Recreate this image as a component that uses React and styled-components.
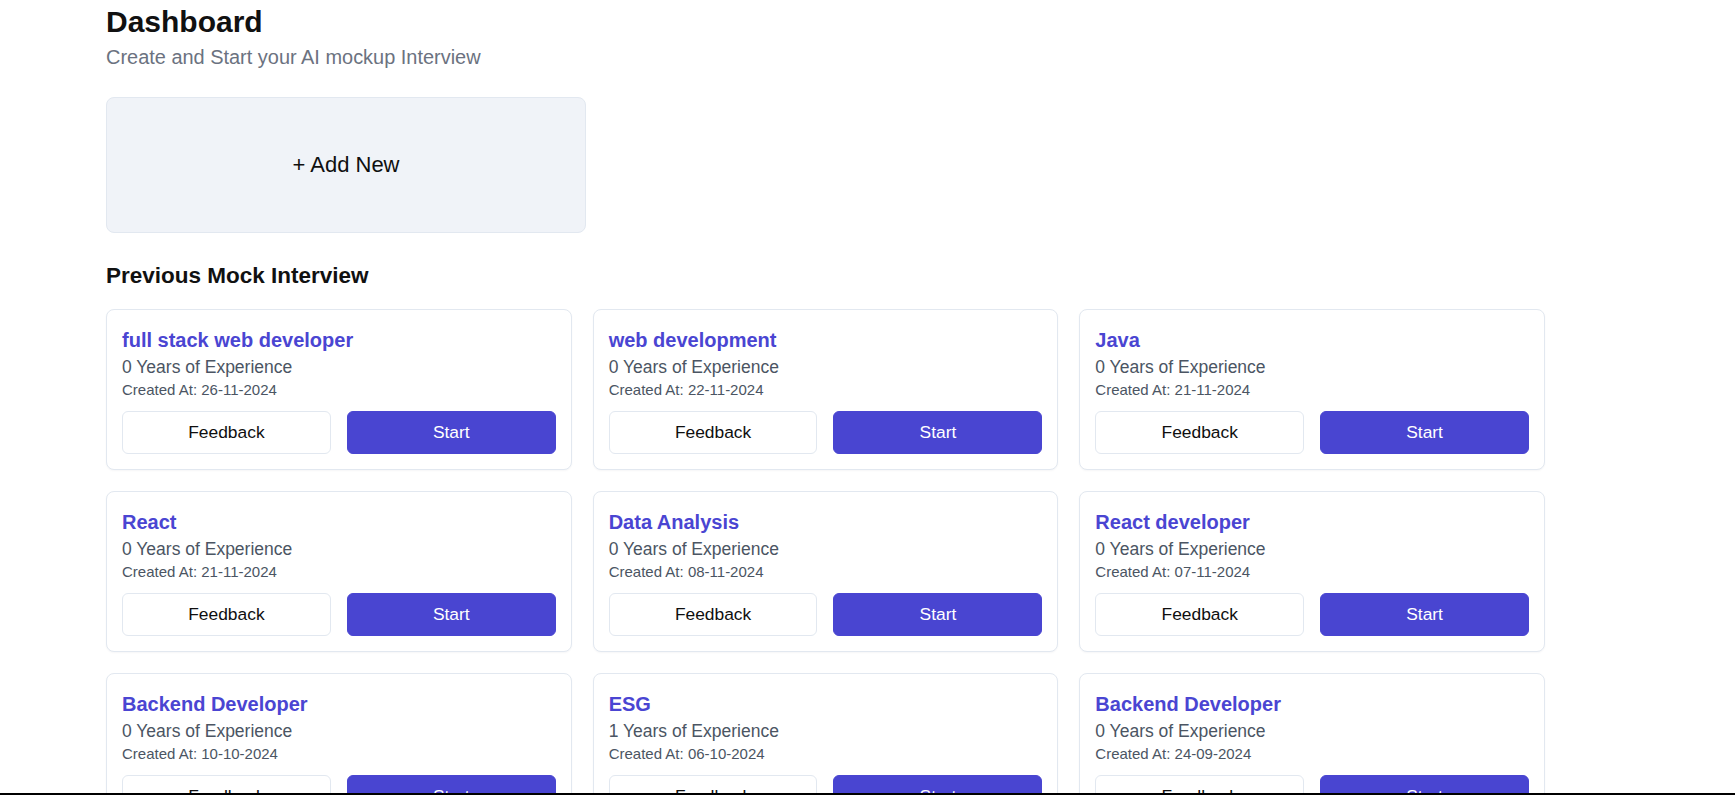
import React from "react";
import styled, { createGlobalStyle } from "styled-components";

const GlobalStyle = createGlobalStyle`
  html, body {
    margin: 0;
    padding: 0;
    background: #ffffff;
  }
  body {
    font-family: "Liberation Sans", Arial, sans-serif;
    color: #111111;
  }
  * { box-sizing: border-box; }
`;

const Page = styled.main`
  padding: 4px 0 40px 106px;
`;

const Title = styled.h1`
  margin: 0;
  font-size: 30px;
  line-height: 36px;
  font-weight: 700;
  color: #111111;
`;

const Subtitle = styled.p`
  margin: 3px 0 0;
  font-size: 19.95px;
  line-height: 28px;
  color: #6b7280;
`;

const AddNewCard = styled.div`
  margin-top: 26px;
  width: 480px;
  height: 136px;
  display: flex;
  align-items: center;
  justify-content: center;
  background: #f0f3f8;
  border: 1px solid #e2e8f0;
  border-radius: 8px;
  font-size: 22px;
  color: #0f0f0f;
  cursor: pointer;
`;

const SectionHeading = styled.h2`
  margin: 27px 0 17px;
  font-size: 22.5px;
  line-height: 32px;
  font-weight: 700;
  color: #111111;
`;

const Grid = styled.div`
  width: 1439px;
  display: grid;
  grid-template-columns: repeat(3, 1fr);
  gap: 21px 21px;
`;

const Card = styled.div`
  border: 1px solid #e2e8f0;
  border-radius: 8px;
  padding: 16px 15px 15px;
  background: #ffffff;
  box-shadow: 0 1px 2px rgba(15, 23, 42, 0.04);
  display: flex;
  flex-direction: column;
`;

const Position = styled.h3`
  margin: 0;
  font-size: 20px;
  line-height: 28px;
  font-weight: 700;
  color: #4a45d2;
`;

const Experience = styled.p`
  margin: 0;
  font-size: 17.5px;
  line-height: 26px;
  color: #4b5563;
`;

const CreatedAt = styled.p`
  margin: 0;
  font-size: 15px;
  line-height: 20px;
  color: #4b5563;
`;

const Actions = styled.div`
  margin-top: 11px;
  display: grid;
  grid-template-columns: 1fr 1fr;
  gap: 16px;
`;

const Button = styled.button`
  height: 43px;
  border-radius: 6px;
  font-family: "Liberation Sans", Arial, sans-serif;
  font-size: 17.4px;
  cursor: pointer;
  border: 1px solid ${(p) => (p.$primary ? "#4945d1" : "#e2e8f0")};
  background: ${(p) => (p.$primary ? "#4945d1" : "#ffffff")};
  color: ${(p) => (p.$primary ? "#ffffff" : "#0f0f0f")};
`;

const BottomEdge = styled.div`
  position: fixed;
  left: 0;
  right: 0;
  bottom: 0;
  height: 2px;
  background: #000000;
`;

const interviews = [
  { role: "full stack web developer", years: 0, date: "26-11-2024" },
  { role: "web development", years: 0, date: "22-11-2024" },
  { role: "Java", years: 0, date: "21-11-2024" },
  { role: "React", years: 0, date: "21-11-2024" },
  { role: "Data Analysis", years: 0, date: "08-11-2024" },
  { role: "React developer", years: 0, date: "07-11-2024" },
  { role: "Backend Developer", years: 0, date: "10-10-2024" },
  { role: "ESG", years: 1, date: "06-10-2024" },
  { role: "Backend Developer", years: 0, date: "24-09-2024" },
];

function InterviewCard({ item }) {
  return (
    <Card>
      <Position>{item.role}</Position>
      <Experience>{item.years} Years of Experience</Experience>
      <CreatedAt>Created At: {item.date}</CreatedAt>
      <Actions>
        <Button>Feedback</Button>
        <Button $primary>Start</Button>
      </Actions>
    </Card>
  );
}

export default function App() {
  return (
    <>
      <GlobalStyle />
      <Page>
        <Title>Dashboard</Title>
        <Subtitle>Create and Start your AI mockup Interview</Subtitle>
        <AddNewCard>+ Add New</AddNewCard>
        <SectionHeading>Previous Mock Interview</SectionHeading>
        <Grid>
          {interviews.map((item, i) => (
            <InterviewCard key={i} item={item} />
          ))}
        </Grid>
      </Page>
      <BottomEdge />
    </>
  );
}
